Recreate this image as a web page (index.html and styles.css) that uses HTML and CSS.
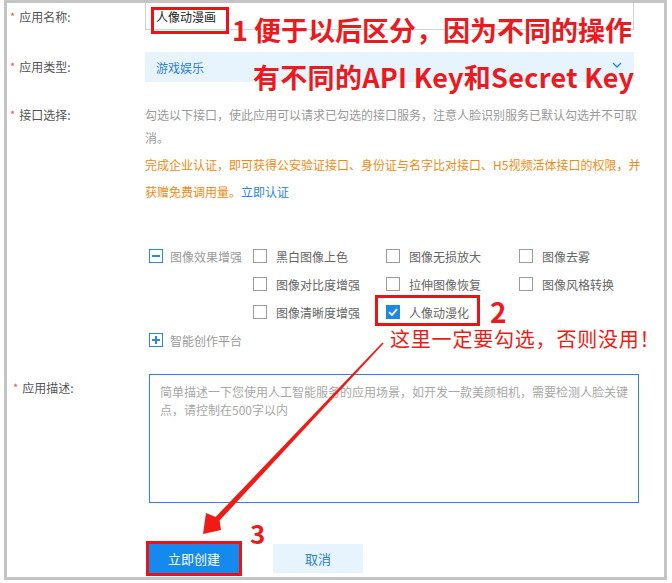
FILE: index.html
```html
<!DOCTYPE html>
<html lang="zh-CN">
<head>
<meta charset="utf-8">
<title>创建应用</title>
<link rel="stylesheet" href="styles.css">
</head>
<body>
<div class="frame">
  <form class="form">
    <div class="row row-name">
      <label class="label"><span class="star">*</span>应用名称:</label>
      <input class="text-input" type="text" value="人像动漫画">
    </div>
    <div class="row row-type">
      <label class="label label-type"><span class="star">*</span>应用类型:</label>
      <div class="select">
        <span>游戏娱乐</span>
        <svg class="chevron" width="10" height="6" viewBox="0 0 10 6"><polyline points="1,1 5,5 9,1" fill="none" stroke="#2b86e3" stroke-width="1.4"/></svg>
      </div>
    </div>
    <div class="row row-api">
      <label class="label label-api"><span class="star">*</span>接口选择:</label>
      <div class="api">
        <p class="hint">勾选以下接口，使此应用可以请求已勾选的接口服务，注意人脸识别服务已默认勾选并不可取<br>消。</p>
        <p class="notice">完成企业认证，即可获得公安验证接口、身份证与名字比对接口、H5视频活体接口的权限，并<br>获赠免费调用量。<a class="link" href="#">立即认证</a></p>
        <div class="group">
          <div class="group-title">
            <span class="toggle"><span class="bar-h"></span></span>
            <span class="group-name">图像效果增强</span>
          </div>
          <div class="options">
            <label class="opt"><span class="box"></span>黑白图像上色</label>
            <label class="opt"><span class="box"></span>图像无损放大</label>
            <label class="opt"><span class="box"></span>图像去雾</label>
            <label class="opt"><span class="box"></span>图像对比度增强</label>
            <label class="opt"><span class="box"></span>拉伸图像恢复</label>
            <label class="opt"><span class="box"></span>图像风格转换</label>
            <label class="opt"><span class="box"></span>图像清晰度增强</label>
            <label class="opt"><span class="box checked"><svg width="14" height="14" viewBox="0 0 14 14"><polyline points="3,7.2 6,10 11,4.2" fill="none" stroke="#fff" stroke-width="1.8"/></svg></span>人像动漫化</label>
          </div>
        </div>
        <div class="group">
          <div class="group-title">
            <span class="toggle"><span class="bar-h"></span><span class="bar-v"></span></span>
            <span class="group-name">智能创作平台</span>
          </div>
        </div>
      </div>
    </div>
    <div class="row row-desc">
      <label class="label label-desc"><span class="star">*</span>应用描述:</label>
      <textarea class="desc">简单描述一下您使用人工智能服务的应用场景，如开发一款美颜相机，需要检测人脸关键
点，请控制在500字以内</textarea>
    </div>
    <div class="row row-actions">
      <span class="label"></span>
      <div class="actions">
        <button type="button" class="btn btn-primary">立即创建</button>
        <button type="button" class="btn btn-cancel">取消</button>
      </div>
    </div>
  </form>
</div>

<div class="note note-1a"><span class="num">1</span> 便于以后区分，因为不同的操作</div>
<div class="note note-1b">有不同的API Key和Secret Key</div>
<div class="mark mark-name"></div>
<div class="mark mark-check"></div>
<div class="note num-2">2</div>
<div class="note-thin">这里一定要勾选，否则没用！</div>
<div class="note num-3">3</div>
<svg class="arrow" width="672" height="583" viewBox="0 0 672 583">
  <polygon points="382.4,342.4 383.6,343.6 219.6,520.6 221,530 203,534 206,513 215.6,517" fill="#f01b14"/>
</svg>
</body>
</html>
```

FILE: styles.css
```css
html, body {
  margin: 0;
  padding: 0;
  background: #fff;
}
body {
  width: 672px;
  height: 583px;
  position: relative;
  overflow: hidden;
  font-family: "Noto Sans CJK SC", "Noto Sans", sans-serif;
  font-size: 12px;
  color: #555;
}
.frame {
  margin-left: 4px;
  width: 657px;
  height: 574px;
  border: 3px solid #c4c4c4;
  overflow: hidden;
}
.form {
  display: flex;
  flex-direction: column;
}
.row {
  display: grid;
  grid-template-columns: 138px 1fr;
  align-items: start;
}
.label {
  display: block;
  padding-left: 3px;
  line-height: 27px;
  color: #555;
  font-size: 12px;
  white-space: nowrap;
}
.star {
  color: #e35b5b;
  font-size: 11px;
  margin-right: 4px;
  position: relative;
  top: -1px;
}
.text-input {
  box-sizing: border-box;
  width: 489px;
  height: 27px;
  margin: 0;
  padding: 0 10px;
  border: 1px solid #d2d2d2;
  border-top: 0;
  font-family: inherit;
  font-size: 12px;
  color: #222;
  outline: none;
}
.row-type {
  margin-top: 21px;
}
.label-type {
  line-height: 30px;
}
.select {
  box-sizing: border-box;
  width: 489px;
  height: 30px;
  background: #e8f4fd;
  display: flex;
  align-items: center;
  justify-content: space-between;
  padding: 0 12px 0 11px;
  color: #2b7fd6;
}
.chevron {
  display: block;
  margin-top: -5px;
}
.row-api {
  margin-top: 21px;
}
.label-api {
  line-height: 23px;
}
.api {
  width: 510px;
  white-space: nowrap;
}
.hint {
  margin: 0;
  line-height: 23px;
  color: #9a9a9a;
}
.notice {
  margin: 2px 0 0;
  line-height: 27px;
  color: #f28a12;
}
.link {
  color: #2b86e3;
  text-decoration: none;
}
.group {
  display: grid;
  grid-template-columns: 104px 1fr;
  margin-left: 4px;
}
.group:first-of-type {
  margin-top: 37px;
}
.group-title {
  display: flex;
  align-items: center;
  height: 28px;
  gap: 7px;
  color: #9a9a9a;
}
.toggle {
  box-sizing: border-box;
  width: 14px;
  height: 14px;
  border: 1.5px solid #2b86e3;
  position: relative;
  flex: none;
}
.bar-h, .bar-v {
  position: absolute;
  background: #2b86e3;
}
.bar-h {
  left: 2px;
  right: 2px;
  top: 4.5px;
  height: 2px;
}
.bar-v {
  top: 2px;
  bottom: 2px;
  left: 4.5px;
  width: 2px;
}
.options {
  display: grid;
  grid-template-columns: 133px 133px 120px;
}
.opt {
  display: flex;
  align-items: center;
  height: 28px;
  gap: 9px;
  color: #666;
  white-space: nowrap;
}
.box {
  box-sizing: border-box;
  width: 14px;
  height: 14px;
  border: 1px solid #9c9c9c;
  flex: none;
}
.box.checked {
  border: 0;
  background: #1e88e5;
}
.box.checked svg {
  display: block;
}
.row-desc {
  margin-top: 20px;
}
.label-desc {
  padding-left: 6px;
  line-height: 28px;
}
.desc {
  box-sizing: border-box;
  display: block;
  width: 490px;
  height: 129px;
  margin: 0 0 0 4px;
  padding: 8px 2px 0 10px;
  border: 1px solid #2b86e3;
  font-family: inherit;
  font-size: 12px;
  line-height: 18px;
  color: #a8a8a8;
  white-space: pre;
  resize: none;
  overflow: hidden;
  outline: none;
}
.row-actions {
  margin-top: 41px;
}
.actions {
  display: flex;
  gap: 34px;
  margin-left: 4px;
}
.btn {
  width: 90px;
  height: 29px;
  border: 0;
  padding: 0;
  font-family: inherit;
  font-size: 13px;
}
.btn-primary {
  background: #1589ee;
  color: #fff;
  outline: 3px solid #e8141c;
  outline-offset: 0;
}
.btn-cancel {
  background: #e8f4fd;
  color: #2b7fd6;
}

/* annotation layer drawn over the screenshot */
.note {
  position: absolute;
  font-family: "Noto Sans CJK SC", "Noto Sans", sans-serif;
  font-weight: 700;
  color: #ea1a21;
  line-height: 1;
  white-space: nowrap;
}
.note-1a {
  left: 232px;
  top: 16px;
  font-size: 27px;
}
.note-1b {
  left: 253px;
  top: 63px;
  font-size: 27px;
  letter-spacing: 0.3px;
}
.num-2 {
  left: 490px;
  top: 297px;
  font-size: 28px;
}
.num-3 {
  left: 250px;
  top: 520px;
  font-size: 26px;
}
.note-thin {
  position: absolute;
  left: 390px;
  top: 329px;
  font-size: 20px;
  line-height: 1;
  letter-spacing: 0.8px;
  color: #f01b14;
  white-space: nowrap;
}
.mark {
  position: absolute;
  border: 3px solid #e8141c;
  box-sizing: border-box;
}
.mark-name {
  left: 151px;
  top: 7px;
  width: 78px;
  height: 27px;
}
.mark-check {
  left: 375px;
  top: 295px;
  width: 105px;
  height: 31px;
}
.arrow {
  position: absolute;
  left: 0;
  top: 0;
  pointer-events: none;
}
```
